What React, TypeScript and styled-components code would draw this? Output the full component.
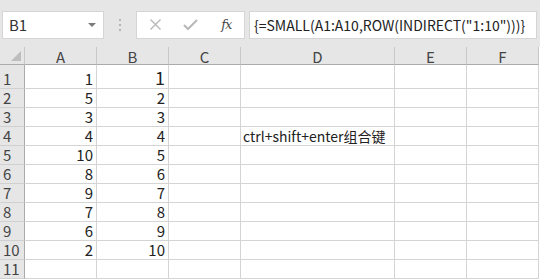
import React from "react";
import styled, { createGlobalStyle } from "styled-components";

const Global = createGlobalStyle`
  html, body { margin: 0; padding: 0; background: #e6e6e6; overflow: hidden; }
  body { font-family: "Noto Sans CJK SC", "Noto Sans", sans-serif; }
`;

const Page = styled.div`
  width: 540px;
  height: 279px;
  display: flex;
  flex-direction: column;
  background: #e6e6e6;
  overflow: hidden;
`;

const Toolbar = styled.div`
  height: 47px;
  display: flex;
  align-items: center;
  padding: 0 3px 0 2px;
  box-sizing: border-box;
  gap: 4px;
`;

const Box = styled.div<{ $w?: number; $grow?: boolean }>`
  height: 28px;
  box-sizing: border-box;
  background: #fff;
  border: 1px solid #d5d5d5;
  display: flex;
  align-items: center;
  ${(p) => (p.$w ? `width: ${p.$w}px; flex: none;` : "")}
  ${(p) => (p.$grow ? "flex: 1; min-width: 0;" : "")}
  margin-top: 2px;
`;

const NameText = styled.span`
  flex: 1;
  padding-left: 6px;
  font-size: 15px;
  color: #333;
`;

const Arrow = styled.span`
  width: 0;
  height: 0;
  border-left: 4px solid transparent;
  border-right: 4px solid transparent;
  border-top: 4px solid #7a7a7a;
  margin-right: 7px;
`;

const Dots = styled.div`
  width: 24px;
  display: flex;
  flex-direction: column;
  align-items: center;
  gap: 3px;
  margin-top: 2px;
  span {
    width: 2px;
    height: 2px;
    background: #b5b5b5;
  }
`;

const Btn = styled.span<{ $dark?: boolean }>`
  width: 36px;
  display: flex;
  justify-content: center;
  align-items: center;
  color: ${(p) => (p.$dark ? "#4a4a4a" : "#b8b8b8")};
`;

const Fx = styled.span`
  font-family: "DejaVu Serif", "Liberation Serif", serif;
  font-style: italic;
  font-size: 13px;
  color: #4a4a4a;
  letter-spacing: -1px;
`;

const FormulaText = styled.span`
  padding-left: 4px;
  font-size: 14px;
  color: #222;
  white-space: nowrap;
`;

const Grid = styled.div`
  display: grid;
  grid-template-columns: 25px 72px 72px 72px 154px 72px 72px;
  grid-template-rows: 18px 24px repeat(10, 19px);
  background: #fff;
`;

const Corner = styled.div`
  background: #e6e6e6;
  border-right: 1px solid #c8c8c8;
  border-bottom: 1px solid #ababab;
  box-sizing: border-box;
  position: relative;
  &::after {
    content: "";
    position: absolute;
    right: 3px;
    bottom: 3px;
    width: 0;
    height: 0;
    border-left: 10px solid transparent;
    border-bottom: 10px solid #bdbdbd;
  }
`;

const ColHead = styled.div`
  background: #e6e6e6;
  border-right: 1px solid #c8c8c8;
  border-bottom: 1px solid #ababab;
  box-sizing: border-box;
  display: flex;
  align-items: center;
  justify-content: center;
  font-size: 15px;
  color: #444;
  line-height: 1;
  padding-top: 1px;
`;

const RowHead = styled.div`
  background: #e6e6e6;
  border-right: 1px solid #ababab;
  border-bottom: 1px solid #d0d0d0;
  box-sizing: border-box;
  display: flex;
  align-items: flex-end;
  padding-left: 3px;
  font-size: 15px;
  color: #444;
  line-height: 18px;
`;

const Cell = styled.div<{ $big?: boolean; $left?: boolean }>`
  border-right: 1px solid #d4d4d4;
  border-bottom: 1px solid #d4d4d4;
  box-sizing: border-box;
  display: flex;
  align-items: flex-end;
  justify-content: ${(p) => (p.$left ? "flex-start" : "flex-end")};
  padding: 0 3px ${(p) => (p.$big ? "1px" : "0")} 2px;
  font-size: ${(p) => (p.$big ? "18px" : p.$left ? "14px" : "15px")};
  line-height: ${(p) => (p.$big ? "20px" : "18px")};
  color: #222;
  white-space: nowrap;
  overflow: visible;
`;

const cols = ["A", "B", "C", "D", "E", "F"];
const aVals = [1, 5, 3, 4, 10, 8, 9, 7, 6, 2];

export default function App() {
  const rows = [];
  for (let r = 1; r <= 11; r++) {
    const a = r <= 10 ? String(aVals[r - 1]) : "";
    const b = r <= 10 ? String(r) : "";
    rows.push(
      <React.Fragment key={r}>
        <RowHead>{r}</RowHead>
        <Cell>{a}</Cell>
        <Cell $big={r === 1}>{b}</Cell>
        <Cell />
        <Cell $left>{r === 4 ? "ctrl+shift+enter组合键" : ""}</Cell>
        <Cell />
        <Cell />
      </React.Fragment>
    );
  }
  return (
    <Page>
      <Global />
      <Toolbar>
        <Box $w={102}>
          <NameText>B1</NameText>
          <Arrow />
        </Box>
        <Dots>
          <span />
          <span />
          <span />
        </Dots>
        <Box $w={109}>
          <Btn style={{ marginLeft: 1 }}>
            <svg width="13" height="13" viewBox="0 0 13 13">
              <path d="M1.5 1.5 L11.5 11.5 M11.5 1.5 L1.5 11.5" stroke="currentColor" strokeWidth="1.4" fill="none" />
            </svg>
          </Btn>
          <Btn>
            <svg width="15" height="13" viewBox="0 0 15 13">
              <path d="M1 7 L5 11 L14 2" stroke="currentColor" strokeWidth="2" fill="none" />
            </svg>
          </Btn>
          <Btn $dark>
            <Fx>fx</Fx>
          </Btn>
        </Box>
        <Box $grow>
          <FormulaText>{'{=SMALL(A1:A10,ROW(INDIRECT("1:10")))}'}</FormulaText>
        </Box>
      </Toolbar>
      <Grid>
        <Corner />
        {cols.map((c) => (
          <ColHead key={c}>{c}</ColHead>
        ))}
        {rows}
      </Grid>
    </Page>
  );
}
